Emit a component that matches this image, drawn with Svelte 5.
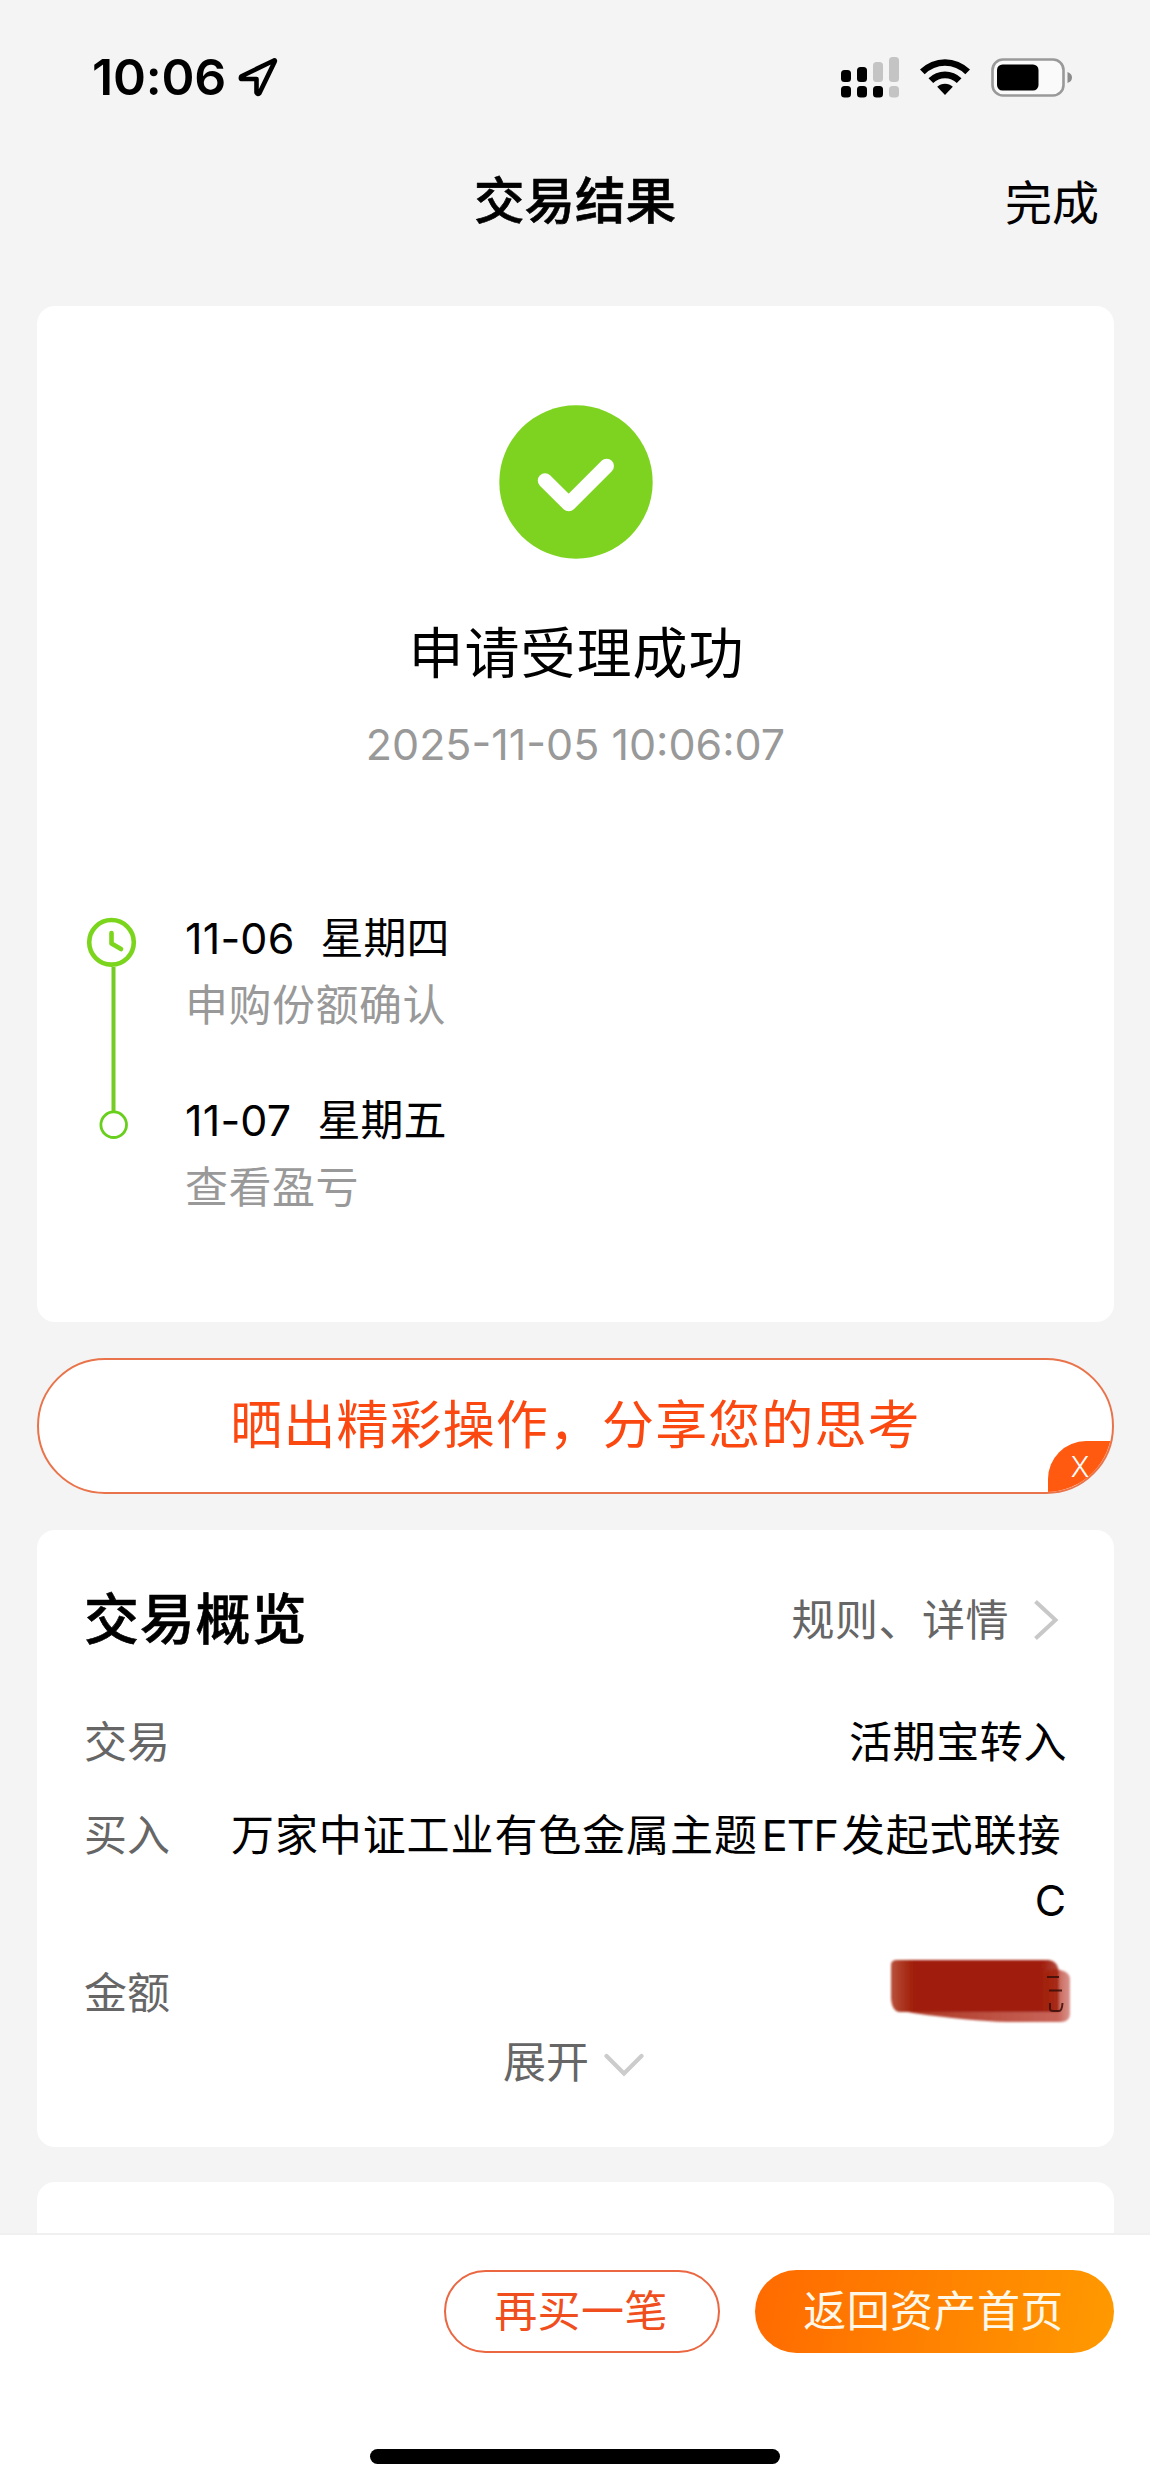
<script lang="ts">
	let title = '交易结果';

	const steps = [
		{ date: '11-06', day: '星期四', text: '申购份额确认' },
		{ date: '11-07', day: '星期五', text: '查看盈亏' }
	];

	// Signal bars: x, top and whether the bar is lit, for both SIM cards
	const bars = [
		{ x: 0, y: 13, on: true, dot: true },
		{ x: 16, y: 10, on: true, dot: true },
		{ x: 32, y: 5, on: false, dot: true },
		{ x: 48, y: 0, on: false, dot: false }
	];
</script>

<div class="screen">
	<div class="status">
		<span class="time">10:06</span>
		<svg class="location" width="40" height="40" viewBox="0 0 40 40">
			<path d="M36 3.5 L3.5 19.2 Q2 22 4 22 H18.5 V35.5 Q20 38 21.5 36 L36.5 5 Q37.5 3 36 3.5 Z" />
		</svg>
		<div class="status-right">
			<svg width="58" height="41" viewBox="0 0 58 41">
				{#each bars as bar}
					<rect x={bar.x} y={bar.y} width="10" height={25 - bar.y} rx="3.5" fill={bar.on ? '#000' : '#c4c4c4'} />
					<rect x={bar.x} y="29" width="10" height="11.5" rx="3.5" fill={bar.dot ? '#000' : '#c4c4c4'} />
				{/each}
			</svg>
			<svg class="wifi" width="50" height="38" viewBox="0 0 50 38">
				<path d="M0 11.5 A35.5 35.5 0 0 1 50 11.5 L45.3 16.2 A28.8 28.8 0 0 0 4.7 16.2 Z" />
				<path d="M8.5 20.2 A23.5 23.5 0 0 1 41.5 20.2 L36.8 25 A16.8 16.8 0 0 0 13.2 25 Z" />
				<path d="M17.2 28.8 A11.2 11.2 0 0 1 32.8 28.8 L25 37 Z" />
			</svg>
			<svg class="battery" width="82" height="39" viewBox="0 0 82 39">
				<rect x="1.5" y="1.5" width="71" height="36" rx="10.5" fill="#fafafa" stroke="#999" stroke-width="2.6" />
				<rect x="6" y="6.5" width="41.5" height="26" rx="5.5" />
				<path d="M76.5 14 Q81 15.5 81 19.5 Q81 23.5 76.5 25 Z" fill="#8c8c8c" />
			</svg>
		</div>
	</div>

	<header>
		<span></span>
		<h1>{title}</h1>
		<span class="done">完成</span>
	</header>

	<main>
		<section class="card result">
			<svg width="154" height="154" viewBox="0 0 154 154">
				<circle cx="77" cy="77" r="76.7" fill="#7ed321" />
				<path d="M46 75.5 L69.7 99 L107.7 61" fill="none" stroke="#fff" stroke-width="14.5" stroke-linecap="round" stroke-linejoin="round" />
			</svg>
			<h2>申请受理成功</h2>
			<p class="timestamp">2025-11-05 10:06:07</p>

			<div class="timeline">
				<svg width="52" height="228" viewBox="0 0 52 228">
					<path d="M27.5 50 V194" stroke="#74cc24" stroke-width="4" />
					<circle cx="25.5" cy="25.3" r="22.3" fill="#fff" stroke="#7ad51c" stroke-width="4.6" />
					<path d="M25.5 16 V26.5 L35 32" fill="none" stroke="#7ad51c" stroke-width="4.6" stroke-linecap="round" stroke-linejoin="round" />
					<circle cx="27.7" cy="207.7" r="12.8" fill="#fff" stroke="#68cf1c" stroke-width="2.8" />
				</svg>
				<div class="steps">
					{#each steps as step}
						<div class="step">
							<p><span class="date">{step.date}</span>{step.day}</p>
							<p class="note">{step.text}</p>
						</div>
					{/each}
				</div>
			</div>
		</section>

		<div class="share">
			晒出精彩操作，分享您的思考
			<span class="close">X</span>
		</div>

		<section class="card overview">
			<div class="overview-head">
				<h3>交易概览</h3>
				<span class="rules">
					规则、详情
					<svg width="26" height="42" viewBox="0 0 26 42">
						<path d="M2.5 2.5 L22.5 21 L2.5 39.5" fill="none" stroke="#c8c8c8" stroke-width="4" />
					</svg>
				</span>
			</div>
			<div class="row">
				<span class="label">交易</span>
				<span class="value">活期宝转入</span>
			</div>
			<div class="row">
				<span class="label">买入</span>
				<span class="value fund">万家中证工业有色金属主题<span class="latin">ETF</span>发起式联接<span class="share-class">C</span></span>
			</div>
			<div class="row">
				<span class="label">金额</span>
				<span class="value amount">
					元
					<svg class="scribble" width="186" height="70" viewBox="0 0 186 70">
						<defs>
							<linearGradient id="ink">
								<stop offset="0" stop-color="#b8503c" />
								<stop offset="0.13" stop-color="#a01f0a" />
								<stop offset="0.9" stop-color="#a01f0a" />
								<stop offset="1" stop-color="#a01f0a" stop-opacity="0.8" />
							</linearGradient>
							<linearGradient id="under">
								<stop offset="0" stop-color="#ab3622" />
								<stop offset="0.93" stop-color="#c9655a" />
								<stop offset="1" stop-color="#d9968f" />
							</linearGradient>
							<filter id="soft"><feGaussianBlur stdDeviation="0.9" /></filter>
						</defs>
						<g filter="url(#soft)">
							<path d="M14 54 L166 12 Q181 14 181 22 V58 Q180 65 172 65 H118 Q80 64 24 56 Z" fill="url(#under)" />
							<path d="M8 3 H160 Q169 4 170 16 V55 H10 Q3 54 2 42 V8 Q2 3 8 3 Z" fill="url(#ink)" />
						</g>
						<path d="M158 20 H170 M160 33.5 H173 M161 46 V52 Q161 54 164 54 H170 Q173 54 173.5 46" fill="none" stroke="#3a0d08" stroke-width="2" opacity="0.85" />
					</svg>
				</span>
			</div>
			<div class="expand">
				展开
				<svg width="40" height="26" viewBox="0 0 40 26">
					<path d="M2.5 3 L20 20.5 L37.5 3" fill="none" stroke="#ccc" stroke-width="4.2" stroke-linecap="round" />
				</svg>
			</div>
		</section>

		<section class="card next"></section>
	</main>

	<footer>
		<div class="actions">
			<button class="again">再买一笔</button>
			<button class="home">返回资产首页</button>
		</div>
		<div class="indicator"></div>
	</footer>
</div>

<style>
	:global(body) {
		margin: 0;
		background: #f4f4f4;
	}

	.screen {
		display: flex;
		flex-direction: column;
		width: 1150px;
		height: 2488px;
		overflow: hidden;
		background: #f4f4f4;
		color: #000;
		font-family: Inter, 'Noto Sans CJK SC', sans-serif;
		font-size: 43px;
	}

	h1,
	h2,
	h3,
	p {
		margin: 0;
	}

	.status {
		display: flex;
		align-items: center;
		height: 154px;
		padding: 0 77px 0 92px;
	}

	.time {
		width: 146px;
		font-size: 50px;
		font-weight: 600;
		letter-spacing: -0.2px;
	}

	.location path {
		fill: none;
		stroke: #000;
		stroke-width: 4.6;
		stroke-linejoin: round;
	}

	.status-right {
		display: flex;
		align-items: center;
		margin-left: auto;
	}

	.wifi,
	.battery {
		margin-left: 21px;
	}

	header {
		display: grid;
		grid-template-columns: 1fr auto 1fr;
		align-items: center;
		height: 94px;
		margin-bottom: 58px;
		padding: 0 51px;
		line-height: 60px;
	}

	h1 {
		font-size: 50.5px;
		font-weight: 500;
		-webkit-text-stroke: 0.6px #000;
	}

	.done {
		padding-top: 4px;
		font-size: 47px;
		text-align: right;
	}

	main {
		display: flex;
		flex: 1;
		flex-direction: column;
		min-height: 0;
		padding: 0 36px 0 37px;
		overflow: hidden;
	}

	.card {
		flex: none;
		box-sizing: border-box;
		border-radius: 18px;
		background: #fff;
	}

	.result {
		display: flex;
		flex-direction: column;
		align-items: center;
		height: 1016px;
		padding-top: 99px;
	}

	h2 {
		margin-top: 59px;
		padding-left: 2px;
		font-size: 55px;
		font-weight: 400;
		line-height: 70px;
		letter-spacing: 1px;
	}

	.timestamp {
		margin-top: 31px;
		color: #999;
		font-size: 43px;
		line-height: 50px;
	}

	.timeline {
		display: flex;
		align-self: stretch;
		gap: 47px;
		margin-top: 136px;
		padding-left: 49px;
	}

	.timeline svg {
		margin-top: 12px;
	}

	.steps {
		display: flex;
		flex-direction: column;
		gap: 49px;
		line-height: 66.5px;
	}

	.date {
		margin-right: 26px;
		letter-spacing: 0.2px;
	}

	.note {
		color: #999;
		letter-spacing: 0.5px;
	}

	.share {
		position: relative;
		flex: none;
		box-sizing: border-box;
		height: 136px;
		margin: 36px 0 36px;
		border: 2px solid #e9744b;
		border-radius: 68px;
		overflow: hidden;
		background: #fff;
		color: #fb4811;
		font-size: 52px;
		line-height: 132px;
		letter-spacing: 1.1px;
		text-align: center;
	}

	.close {
		position: absolute;
		right: -2px;
		bottom: -2px;
		box-sizing: border-box;
		width: 66px;
		height: 53px;
		padding-right: 1px;
		border-top-left-radius: 38px;
		background: #ff5a10;
		color: #fff;
		font-size: 28px;
		font-weight: 300;
		line-height: 53px;
	}

	.overview {
		height: 617px;
		padding: 48px 47px 0 47px;
	}

	.overview-head {
		display: flex;
		align-items: center;
		justify-content: space-between;
		height: 84px;
		margin-bottom: 48px;
	}

	h3 {
		margin-top: -3px;
		font-size: 55px;
		font-weight: 500;
		letter-spacing: 0.8px;
		line-height: 80px;
		-webkit-text-stroke: 0.6px #000;
	}

	.rules {
		display: flex;
		align-items: center;
		gap: 24px;
		padding-right: 8px;
		color: #666;
		letter-spacing: 0.5px;
		line-height: 65px;
	}

	.row {
		display: flex;
		justify-content: space-between;
		margin-bottom: 28px;
		line-height: 65px;
	}

	.label {
		flex: none;
		color: #666;
	}

	.value {
		letter-spacing: 0.6px;
		text-align: right;
	}

	/* the first line sits a little in from the edge, the class letter does not */
	.fund {
		width: 836px;
		text-align: left;
		letter-spacing: 0.9px;
	}

	.latin {
		margin: 0 4px;
		letter-spacing: -1px;
	}

	.share-class {
		display: block;
		text-align: right;
	}

	.amount {
		position: relative;
	}

	.scribble {
		position: absolute;
		right: -8px;
		top: -4px;
	}

	.expand {
		display: flex;
		align-items: center;
		justify-content: center;
		gap: 15px;
		margin-top: -24px;
		padding-right: 4px;
		color: #666;
		line-height: 65px;
	}

	.expand svg {
		margin-top: 6px;
	}

	.next {
		height: 120px;
		margin-top: 35px;
	}

	footer {
		display: flex;
		flex: none;
		flex-direction: column;
		align-items: center;
		box-sizing: border-box;
		height: 255px;
		border-top: 2px solid #f0f0f0;
		background: #fff;
	}

	.actions {
		display: flex;
		align-self: stretch;
		justify-content: flex-end;
		gap: 35px;
		padding: 35px 36px 0 0;
	}

	button {
		box-sizing: border-box;
		height: 83px;
		padding: 0 2px 0 0;
		border: 0;
		border-radius: 42px;
		font: inherit;
		line-height: 79px;
		letter-spacing: 0.4px;
	}

	.again {
		width: 276px;
		border: 2px solid #ea6742;
		background: #fff;
		color: #f04e1c;
	}

	.home {
		width: 359px;
		background: linear-gradient(100deg, #ff6a00, #ff9a00);
		color: #fff8e8;
	}

	.indicator {
		width: 410px;
		height: 15px;
		margin-top: 96px;
		border-radius: 8px;
		background: #000;
	}
</style>
